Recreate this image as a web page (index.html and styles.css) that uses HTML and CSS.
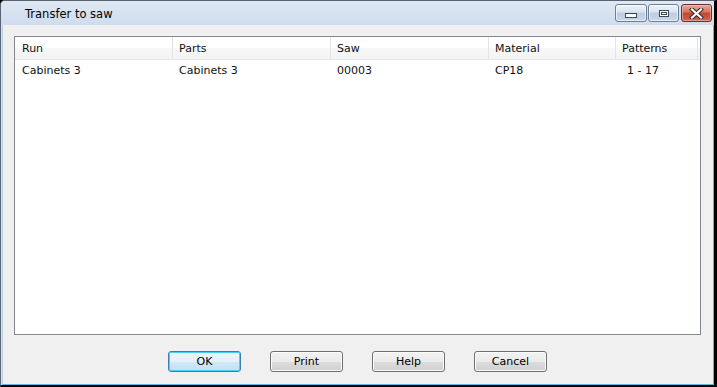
FILE: index.html
```html
<!DOCTYPE html>
<html lang="en">
<head>
  <meta charset="UTF-8">
  <title>Transfer to saw</title>
  <link rel="stylesheet" href="styles.css">
</head>
<body>

<div class="window">
  <div class="titlebar">
    <span class="title">Transfer to saw</span>
    <div class="controls">
      <button class="ctl ctl-min"><span class="glyph-min"></span></button>
      <button class="ctl ctl-max"><span class="glyph-max"></span></button>
      <button class="ctl ctl-close">
        <svg width="15" height="11" viewBox="0 0 15 11">
          <path d="M3 1.5 L12 9.5 M12 1.5 L3 9.5" stroke="#3b2a2a" stroke-width="4.2" stroke-linecap="square"/>
          <path d="M3 1.5 L12 9.5 M12 1.5 L3 9.5" stroke="#ffffff" stroke-width="2.2" stroke-linecap="square"/>
        </svg>
      </button>
    </div>
  </div>

  <div class="client">
    <div class="list">
      <div class="list-head">
        <div class="cell col-run">Run</div>
        <div class="cell col-parts">Parts</div>
        <div class="cell col-saw">Saw</div>
        <div class="cell col-material">Material</div>
        <div class="cell col-patterns">Patterns</div>
      </div>
      <div class="list-row">
        <div class="cell col-run">Cabinets 3</div>
        <div class="cell col-parts">Cabinets 3</div>
        <div class="cell col-saw">00003</div>
        <div class="cell col-material">CP18</div>
        <div class="cell col-patterns center">1 - 17</div>
      </div>
    </div>

    <div class="actions">
      <button class="btn btn-default">OK</button>
      <button class="btn">Print</button>
      <button class="btn">Help</button>
      <button class="btn">Cancel</button>
    </div>
  </div>
</div>

</body>
</html>
```

FILE: styles.css
```css
body {
  margin: 0;
  padding: 0;
  background: #000;
  font-family: "DejaVu Sans", sans-serif;
  font-size: 11px;
  color: #000;
}

.window {
  width: 717px;
  height: 387px;
  box-sizing: border-box;
  display: flex;
  flex-direction: column;
  background: #d9e4f2;
  border-top: 1px solid #5a6470;
  border-left: 1px solid #5a6470;
  border-right: 3px solid #000;
  border-bottom: 2px solid #000;
  border-top-left-radius: 5px;
  overflow: hidden;
}

.titlebar {
  height: 24px;
  display: flex;
  align-items: center;
  justify-content: space-between;
  background: linear-gradient(to bottom, #dfe8f4, #cfdcee);
  flex-shrink: 0;
}

.title {
  margin-left: 24px;
  margin-top: 2px;
  font-size: 11.5px;
  color: #000;
}

.controls {
  display: flex;
  gap: 1px;
  margin-right: 2px;
  margin-top: 3px;
  align-self: flex-start;
}

.ctl {
  width: 32px;
  height: 18px;
  padding: 0;
  border: 1px solid #6d7d93;
  border-radius: 3px;
  background: linear-gradient(to bottom, #f0f4fa 0%, #d9e3f0 45%, #bccde3 50%, #c9d8ea 100%);
  display: flex;
  align-items: center;
  justify-content: center;
  box-shadow: inset 0 0 0 1px rgba(255, 255, 255, 0.6);
}

.ctl-max {
  width: 31px;
}

.ctl-close {
  width: 31px;
  margin-left: 1px;
  border-color: #6b2f26;
  background: linear-gradient(to bottom, #e9a99c 0%, #d7725f 45%, #c24630 50%, #d0664f 100%);
  box-shadow: inset 0 0 0 1px rgba(255, 210, 200, 0.5);
}

.glyph-min {
  width: 10px;
  height: 3px;
  background: #fff;
  border: 1px solid #3c4654;
  margin-top: 5px;
}

.glyph-max {
  width: 8px;
  height: 5px;
  border: 1px solid #3c4654;
  background: #fff;
  box-shadow: inset 0 0 0 1px #fff, inset 0 0 0 2px #3c4654;
}

.client {
  flex: 1;
  display: flex;
  flex-direction: column;
  background: #f0f0f0;
  border-left: 1px solid #b7cbe3;
  border-right: 1px solid #63b6e0;
  border-bottom: 1px solid #63b6e0;
  margin-left: 1px;
  padding: 11px 12px 0 11px;
}

.list {
  height: 299px;
  box-sizing: border-box;
  border: 1px solid #828790;
  background: #fff;
}

.list-head {
  display: flex;
  height: 23px;
  box-sizing: border-box;
  border-bottom: 1px solid #e5e5e5;
  background: linear-gradient(to bottom, #ffffff 0%, #ffffff 50%, #f6f7f9 51%, #f3f4f6 100%);
}

.list-head .cell {
  border-right: 1px solid #e3e4e6;
  line-height: 24px;
}

.list-row {
  display: flex;
  height: 19px;
}

.list-row .cell {
  line-height: 21px;
  border-right: 1px solid transparent;
}

.cell {
  box-sizing: border-box;
  padding-left: 6px;
  white-space: nowrap;
  overflow: hidden;
  color: #111;
}

.col-run {
  width: 158px;
  padding-left: 7px;
}

.col-parts,
.col-saw {
  width: 158px;
}

.col-material {
  width: 127px;
}

.col-patterns {
  width: 82px;
}

.center {
  padding-left: 11px;
}

.actions {
  display: flex;
  justify-content: center;
  gap: 29px;
  margin-top: 16px;
}

.btn {
  width: 73px;
  height: 21px;
  padding: 0;
  font-family: "DejaVu Sans", sans-serif;
  font-size: 11px;
  color: #000;
  border: 1px solid #707070;
  border-radius: 3px;
  background: linear-gradient(to bottom, #f2f2f2 0%, #ebebeb 50%, #dddddd 51%, #cfcfcf 100%);
  box-shadow: inset 0 0 0 1px #fcfcfc;
}

.btn-default {
  border-color: #3c7fb1;
  box-shadow: inset 0 0 0 1px #48d0f2;
  background: linear-gradient(to bottom, #eaf6fd 0%, #e3f1fb 50%, #d2e8f7 51%, #c4e0f4 100%);
}
```
